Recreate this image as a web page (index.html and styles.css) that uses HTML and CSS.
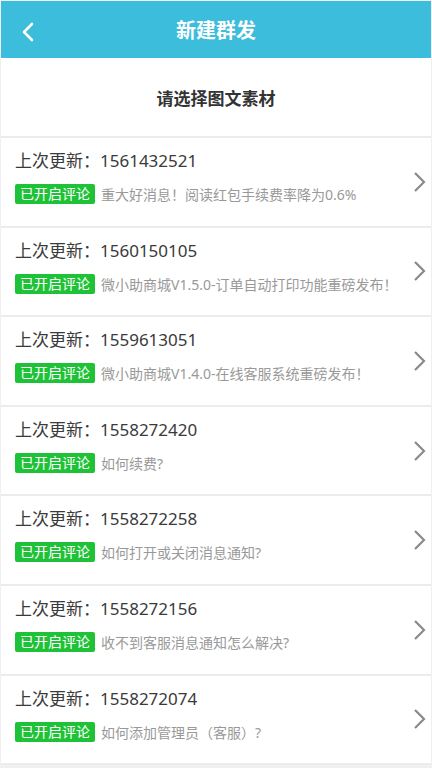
FILE: index.html
```html
<!DOCTYPE html>
<html>
<head>
  <meta charset="utf-8">
  <title>新建群发</title>
  <link rel="stylesheet" href="styles.css">
</head>
<body>
  <div class="page">
    <div class="top-bar">
      <svg class="back" width="14" height="20" viewBox="0 0 14 20">
        <path d="M11 2 L3 10 L11 18" fill="none" stroke="#fff" stroke-width="2.6" stroke-linecap="round" stroke-linejoin="round"/>
      </svg>
      <h1>新建群发</h1>
    </div>

    <div class="intro">请选择图文素材</div>

    <ul class="list">
      <li class="item">
        <div class="info">
          <p class="updated">上次更新：1561432521</p>
          <p class="row"><span class="tag">已开启评论</span><span class="desc">重大好消息！阅读红包手续费率降为0.6%</span></p>
        </div>
        <svg class="arrow" width="14" height="22" viewBox="0 0 14 22"><path d="M2 2 L11 11 L2 20" fill="none" stroke="#8a8a8a" stroke-width="2.2"/></svg>
      </li>
      <li class="item">
        <div class="info">
          <p class="updated">上次更新：1560150105</p>
          <p class="row"><span class="tag">已开启评论</span><span class="desc">微小助商城V1.5.0-订单自动打印功能重磅发布！</span></p>
        </div>
        <svg class="arrow" width="14" height="22" viewBox="0 0 14 22"><path d="M2 2 L11 11 L2 20" fill="none" stroke="#8a8a8a" stroke-width="2.2"/></svg>
      </li>
      <li class="item">
        <div class="info">
          <p class="updated">上次更新：1559613051</p>
          <p class="row"><span class="tag">已开启评论</span><span class="desc">微小助商城V1.4.0-在线客服系统重磅发布！</span></p>
        </div>
        <svg class="arrow" width="14" height="22" viewBox="0 0 14 22"><path d="M2 2 L11 11 L2 20" fill="none" stroke="#8a8a8a" stroke-width="2.2"/></svg>
      </li>
      <li class="item">
        <div class="info">
          <p class="updated">上次更新：1558272420</p>
          <p class="row"><span class="tag">已开启评论</span><span class="desc">如何续费?</span></p>
        </div>
        <svg class="arrow" width="14" height="22" viewBox="0 0 14 22"><path d="M2 2 L11 11 L2 20" fill="none" stroke="#8a8a8a" stroke-width="2.2"/></svg>
      </li>
      <li class="item">
        <div class="info">
          <p class="updated">上次更新：1558272258</p>
          <p class="row"><span class="tag">已开启评论</span><span class="desc">如何打开或关闭消息通知?</span></p>
        </div>
        <svg class="arrow" width="14" height="22" viewBox="0 0 14 22"><path d="M2 2 L11 11 L2 20" fill="none" stroke="#8a8a8a" stroke-width="2.2"/></svg>
      </li>
      <li class="item">
        <div class="info">
          <p class="updated">上次更新：1558272156</p>
          <p class="row"><span class="tag">已开启评论</span><span class="desc">收不到客服消息通知怎么解决?</span></p>
        </div>
        <svg class="arrow" width="14" height="22" viewBox="0 0 14 22"><path d="M2 2 L11 11 L2 20" fill="none" stroke="#8a8a8a" stroke-width="2.2"/></svg>
      </li>
      <li class="item">
        <div class="info">
          <p class="updated">上次更新：1558272074</p>
          <p class="row"><span class="tag">已开启评论</span><span class="desc">如何添加管理员（客服）?</span></p>
        </div>
        <svg class="arrow" width="14" height="22" viewBox="0 0 14 22"><path d="M2 2 L11 11 L2 20" fill="none" stroke="#8a8a8a" stroke-width="2.2"/></svg>
      </li>
    </ul>
  </div>
</body>
</html>
```

FILE: styles.css
```css
body {
  margin: 0;
  background-color: #f0f0f0;
  font-family: "Noto Sans", "Noto Sans CJK SC", sans-serif;
  color: #333;
}

.page {
  margin: 1px 1px 0 1px;
}

.top-bar {
  position: relative;
  height: 57px;
  background-color: #3cbddb;
  display: flex;
  align-items: center;
  justify-content: center;
}

.back {
  position: absolute;
  left: 20px;
  top: 21px;
}

.top-bar h1 {
  margin: 0;
  color: #fff;
  font-size: 20px;
  font-weight: bold;
}

.intro {
  height: 78px;
  background-color: #fff;
  display: flex;
  align-items: center;
  justify-content: center;
  font-size: 17px;
  font-weight: bold;
  color: #333;
  border-bottom: 2px solid #ececec;
}

.list {
  list-style: none;
  margin: 0;
  padding: 0;
}

.item {
  display: flex;
  height: 87.6px;
  padding: 0 4px 0 14px;
  background-color: #fff;
  border-bottom: 2px solid #ececec;
}

.info {
  flex: 1;
  min-width: 0;
  padding-top: 11px;
}

.info p {
  margin: 0;
}

.info .updated {
  font-size: 17px;
  line-height: 24px;
  color: #3a3a3a;
}

.info .row {
  display: flex;
  align-items: center;
  margin-top: 11px;
}

.tag {
  background-color: #1dc236;
  color: #fff;
  font-size: 14px;
  line-height: 20px;
  padding: 0 5px;
  border-radius: 2px;
}

.desc {
  margin-left: 6px;
  font-size: 14px;
  color: #999;
  white-space: nowrap;
}

.arrow {
  flex-shrink: 0;
  align-self: center;
}
```
